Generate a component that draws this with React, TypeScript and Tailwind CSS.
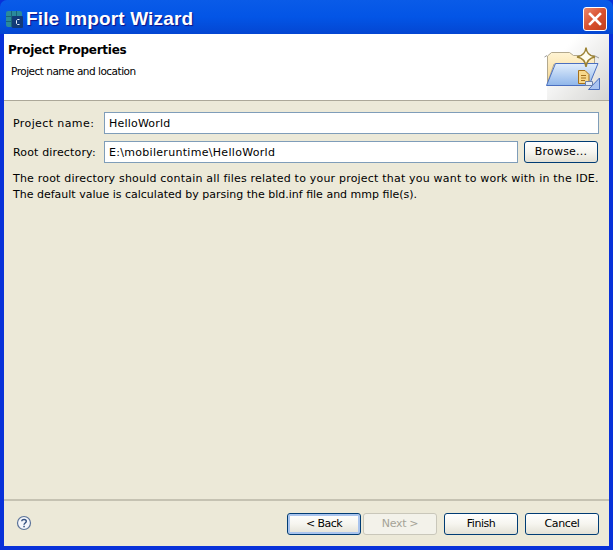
const FONT = "font-['DejaVu_Sans',sans-serif] text-[11px] tracking-[0px]";

function WizardButton({ label, width, tracking, isDefault, disabled }: { label: string; width: string; tracking: string; isDefault?: boolean; disabled?: boolean }) {
  if (disabled) {
    return (
      <button disabled className={`${width} ${tracking} h-[22px] pt-[1px] rounded-[3px] border border-[#c9c7ba] bg-[#f3f2ea] text-[#a5a397] flex items-center justify-center`}>
        {label}
      </button>
    );
  }
  return (
    <button className={`${width} ${tracking} h-[22px] pt-[1px] rounded-[3px] border border-[#003c74] bg-gradient-to-b from-white via-[#f6f5ef] to-[#e3e1d6] text-black flex items-center justify-center ${isDefault ? 'shadow-[inset_0_0_0_2px_#a9c4ee]' : ''}`}>
      {label}
    </button>
  );
}

function AppIcon() {
  return (
    <svg width="17" height="17" viewBox="0 0 17 17" className="shrink-0">
      <rect x="0" y="0" width="16" height="16" rx="2" fill="#2a8a9c" />
      <path d="M0 5.500H16M0 10.500H16M5.500 0V16M10.500 0V16" stroke="#1b6477" strokeWidth="1" />
      <rect x="6" y="5" width="11" height="12" rx="1" fill="#123a78" />
      <path d="M13.500 8.500H11.500L10.500 9.500V12.500L11.500 13.500H13.500" fill="none" stroke="#e6eefc" strokeWidth="1" />
    </svg>
  );
}

function FolderBanner() {
  return (
    <svg width="57" height="43" viewBox="0 0 57 43" className="absolute right-[8px] top-[13px]">
      <defs>
        <linearGradient id="folderFront" x1="0" y1="0" x2="0" y2="1">
          <stop offset="0" stopColor="#e2eefc" />
          <stop offset="1" stopColor="#8fb6ea" />
        </linearGradient>
        <linearGradient id="folderBack" x1="0" y1="0" x2="0" y2="1">
          <stop offset="0" stopColor="#fff4d4" />
          <stop offset="1" stopColor="#f6d894" />
        </linearGradient>
      </defs>
      <path d="M0.500 10 L3 8.500 M50 8.500 L55 11" stroke="#9a9a9a" strokeWidth="1" />
      <path d="M3.500 36 L3.500 9 L7.500 5.500 H25.500 L29.500 8.500 H50.500 V17 H10 Z" fill="url(#folderBack)" stroke="#b3a98e" strokeWidth="1" />
      <path d="M11.500 16.500 H54 L45 38.500 H2.500 Z" fill="url(#folderFront)" stroke="#4a6fc0" strokeWidth="1" />
      <path d="M44.500 42.500 L55.500 31 V42.500 Z" fill="#a9c3f0" stroke="#4a6fc0" strokeWidth="1" />
      <path d="M34.500 23.500 H41 L45 27.500 V36.500 H34.500 Z" fill="#f7d88c" stroke="#a5701c" strokeWidth="1" />
      <path d="M37 28.500 H42 M37 31 H42 M37 33.500 H41" stroke="#a5701c" strokeWidth="1" />
      <path d="M41.500 34.500 H48.500 V38.500 H41.500 Z" fill="#dfe9f8" stroke="#6a7ea8" strokeWidth="1" />
      <path d="M42 0.500 C42.500 6 45 9 51 10 C45 11 42.500 14 42 20 C41.500 14 39 11 33 10 C39 9 41.500 6 42 0.500 Z" fill="#fffdf0" stroke="#9c8334" strokeWidth="1.500" />
    </svg>
  );
}

export default function App() {
  return (
    <div className={`w-[613px] h-[550px] bg-[#0831d9] flex flex-col overflow-hidden ${FONT}`}>
      <div className="h-[34px] shrink-0 rounded-t-[7px] bg-gradient-to-b from-[#0a5be8] via-[#0355e6] to-[#0446d2] flex items-center pt-[4px] pl-[6px] pr-[6px] gap-[3px]">
        <AppIcon />
        <span className="font-['Liberation_Sans',sans-serif] text-[19px] font-bold tracking-[0.15px] text-white [text-shadow:1px_1px_1px_#0f1089]">
          File Import Wizard
        </span>
        <button className="ml-auto w-[24px] h-[24px] -mt-[1px] rounded-[3px] border border-white bg-gradient-to-br from-[#e8876c] via-[#d9512f] to-[#c33f1c] flex items-center justify-center">
          <svg width="14" height="14" viewBox="0 0 14 14">
            <path d="M2 2 L12 12 M12 2 L2 12" stroke="white" strokeWidth="2.600" strokeLinecap="square" />
          </svg>
        </button>
      </div>

      <div className="flex-1 mx-[4px] mb-[4px] flex flex-col bg-[#ece9d8] min-h-0">
        <div className="relative h-[67px] shrink-0 bg-white border-b border-[#aca899] overflow-hidden text-black">
          <div className="absolute right-0 top-0 bottom-0 w-[62px] bg-gradient-to-br from-white from-[25%] to-[#d6d6d3]" />
          <div className="relative pl-[4px] pt-[8px] font-bold leading-[16px] text-[12px] tracking-[-0.25px]">Project Properties</div>
          <div className="relative pl-[7px] pt-[5px] leading-[16px] text-[10.500px] tracking-[-0.5px]">Project name and location</div>
          <FolderBanner />
        </div>

        <div className="flex-1 flex flex-col pl-[9px] pr-[10px] pt-[11px] text-black">
          <div className="flex items-center h-[22px] gap-[8px]">
            <span className="w-[83px] shrink-0 pt-[2px] tracking-[0.4px]">Project name:</span>
            <div className="flex-1 h-[22px] pt-[2px] bg-white border border-[#7f9db9] pl-[4px] flex items-center tracking-[0.2px]">HelloWorld</div>
          </div>
          <div className="flex items-center h-[24px] mt-[6px] gap-[8px]">
            <span className="w-[83px] shrink-0 pt-[2px] tracking-[0.15px]">Root directory:</span>
            <div className="flex-1 h-[22px] pt-[2px] bg-white border border-[#7f9db9] pl-[4px] flex items-center tracking-[0.3px]">E:\mobileruntime\HelloWorld</div>
            <div className="-ml-[2px] mr-[1px]">
              <WizardButton label="Browse..." width="w-[74px]" tracking="tracking-[0.2px]" />
            </div>
          </div>
          <p className="mt-[7px] leading-[16px] whitespace-nowrap">
            <span className="block tracking-[0.2px]">The root directory should contain all files related to your project that you want to work with in the IDE.</span>
            <span className="block">The default value is calculated by parsing the bld.inf file and mmp file(s).</span>
          </p>
        </div>

        <div className="h-[47px] shrink-0 border-t-2 border-t-[#c5c2b2] flex items-start pt-[12px] pl-[12px] pr-[10px] text-black">
          <svg width="16" height="16" viewBox="0 0 16 16" className="mt-[2px]">
            <circle cx="8" cy="8" r="6.500" fill="#f4f6fb" stroke="#5b7399" strokeWidth="1.200" />
            <path d="M5.800 6.200 C5.800 3.900 10.300 3.900 10.300 6.300 C10.300 8 8 8 8 9.800" fill="none" stroke="#33507f" strokeWidth="1.400" />
            <rect x="7.300" y="10.800" width="1.500" height="1.500" fill="#33507f" />
          </svg>
          <div className="ml-auto flex items-center gap-[7px]">
            <div className="flex items-center gap-[2px]">
              <WizardButton label="< Back" width="w-[74px]" tracking="tracking-[-0.6px]" isDefault />
              <WizardButton label="Next >" width="w-[74px]" tracking="tracking-[-0.3px]" disabled />
            </div>
            <WizardButton label="Finish" width="w-[74px]" tracking="tracking-[-0.5px]" />
            <WizardButton label="Cancel" width="w-[74px]" tracking="tracking-[-0.4px]" />
          </div>
        </div>
      </div>
    </div>
  );
}
